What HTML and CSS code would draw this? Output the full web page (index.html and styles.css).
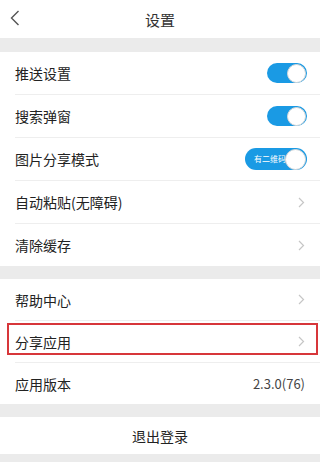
FILE: index.html
```html
<!DOCTYPE html>
<html lang="zh-CN">
<head>
    <meta charset="UTF-8">
    <meta name="viewport" content="width=device-width, initial-scale=1.0">
    <title>设置</title>
    <link rel="stylesheet" href="styles.css">
</head>
<body>

    <!-- Header -->
    <header class="topbar">
        <svg class="back" width="10" height="16" viewBox="0 0 10 16">
            <path d="M8.5 1 L1.5 8 L8.5 15" fill="none" stroke="#555" stroke-width="1.4"/>
        </svg>
        <span class="title">设置</span>
    </header>

    <!-- Kelompok 1 -->
    <div class="group first">
        <div class="row">
            <span class="label">推送设置</span>
            <span class="switch"><span class="knob"></span></span>
        </div>
        <div class="row">
            <span class="label">搜索弹窗</span>
            <span class="switch"><span class="knob"></span></span>
        </div>
        <div class="row">
            <span class="label">图片分享模式</span>
            <span class="switch wide"><span class="switch-text">有二维码</span><span class="knob"></span></span>
        </div>
        <div class="row">
            <span class="label">自动粘贴(无障碍)</span>
            <svg class="arrow" width="7" height="11" viewBox="0 0 7 11"><path d="M1 1 L5.5 5.5 L1 10" fill="none" stroke="#c6c6c6" stroke-width="1.2"/></svg>
        </div>
        <div class="row">
            <span class="label">清除缓存</span>
            <svg class="arrow" width="7" height="11" viewBox="0 0 7 11"><path d="M1 1 L5.5 5.5 L1 10" fill="none" stroke="#c6c6c6" stroke-width="1.2"/></svg>
        </div>
    </div>

    <!-- Kelompok 2 -->
    <div class="group second">
        <div class="row">
            <span class="label">帮助中心</span>
            <svg class="arrow" width="7" height="11" viewBox="0 0 7 11"><path d="M1 1 L5.5 5.5 L1 10" fill="none" stroke="#c6c6c6" stroke-width="1.2"/></svg>
        </div>
        <div class="row">
            <span class="label">分享应用</span>
            <svg class="arrow" width="7" height="11" viewBox="0 0 7 11"><path d="M1 1 L5.5 5.5 L1 10" fill="none" stroke="#c6c6c6" stroke-width="1.2"/></svg>
            <span class="mark-box"></span>
        </div>
        <div class="row">
            <span class="label">应用版本</span>
            <span class="version">2.3.0(76)</span>
        </div>
    </div>

    <!-- Keluar -->
    <div class="logout">退出登录</div>

</body>
</html>
```

FILE: styles.css
```css
body {
    font-family: "Noto Sans CJK SC", "Noto Sans", sans-serif;
    background: #ebebeb;
    color: #222;
    margin: 0;
    padding: 0;
    width: 320px;
    height: 462px;
    overflow: hidden;
}

/* Header */
.topbar {
    height: 38px;
    background: #fff;
    display: flex;
    align-items: center;
    justify-content: center;
    position: relative;
}
.back {
    position: absolute;
    left: 10px;
    top: 10px;
}
.title {
    font-size: 15px;
    color: #333;
}

/* Grup */
.group {
    background: #fff;
}
.group.first {
    margin-top: 14px;
}
.group.second {
    margin-top: 13px;
}
.row {
    height: 42px;
    margin-left: 15px;
    padding-right: 13px;
    display: flex;
    align-items: center;
    justify-content: space-between;
    border-bottom: 1px solid #eeeeee;
    position: relative;
}
.group.second .row {
    height: 41px;
}
.row:last-child {
    border-bottom: none;
}
.label {
    font-size: 14px;
    color: #222;
}

/* Saklar */
.switch {
    width: 40px;
    height: 20px;
    border-radius: 10px;
    background: #1a9ae4;
    position: relative;
    display: inline-block;
}
.switch.wide {
    width: 62px;
    height: 22px;
    border-radius: 11px;
}
.knob {
    position: absolute;
    right: 1px;
    top: 1px;
    width: 17px;
    height: 17px;
    border-radius: 50%;
    background: #fff;
    border: 0.5px solid #d8d8d8;
}
.switch.wide .knob {
    width: 19px;
    height: 19px;
}
.switch-text {
    position: absolute;
    left: 9px;
    top: 4px;
    font-size: 8px;
    line-height: 14px;
    color: #fff;
}

.arrow {
    margin-right: 2px;
}
.version {
    font-size: 13px;
    color: #444;
    margin-right: 2px;
}

/* Kotak merah */
.mark-box {
    position: absolute;
    left: -8px;
    right: 2px;
    top: 2px;
    bottom: 7px;
    border: 2px solid #d7363a;
}

/* Keluar */
.logout {
    margin-top: 13px;
    height: 37px;
    background: #fff;
    display: flex;
    align-items: center;
    justify-content: center;
    font-size: 14px;
    color: #222;
}
```
